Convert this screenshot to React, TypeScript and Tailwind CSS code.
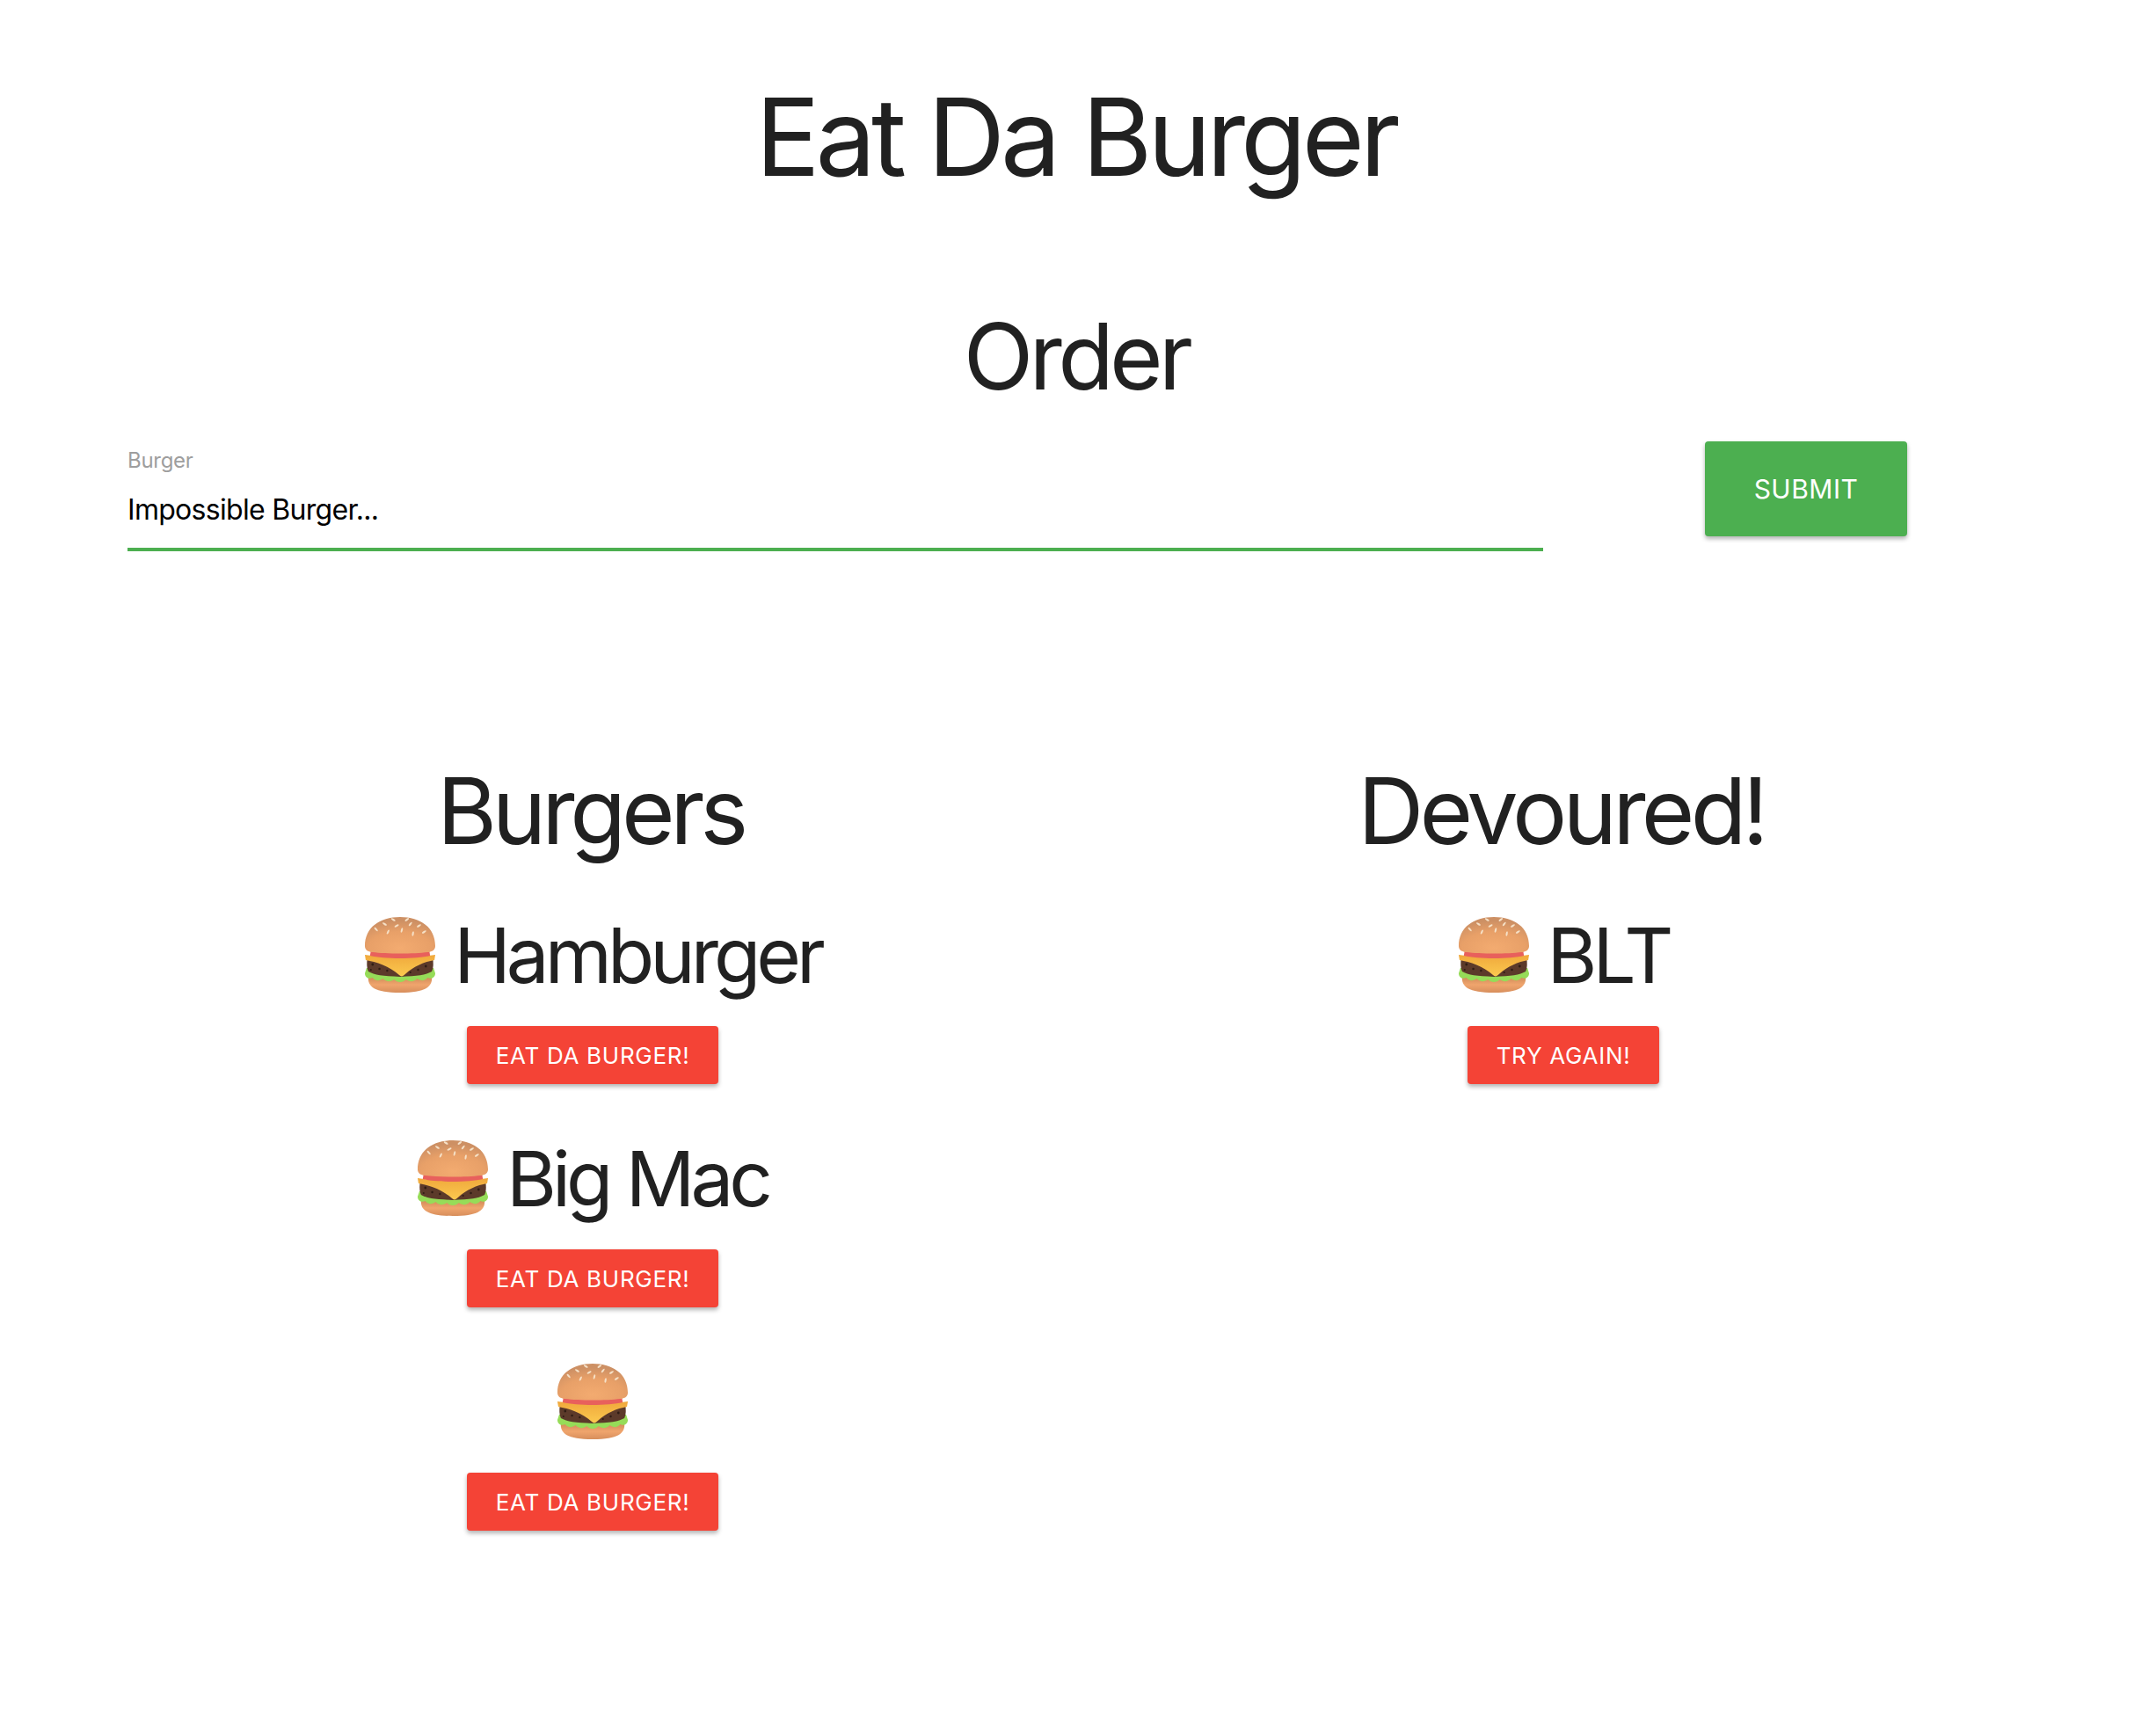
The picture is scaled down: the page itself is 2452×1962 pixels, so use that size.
import React from "react";

let uid = 0;
function BurgerIcon({ className = "" }: { className?: string }) {
  const id = React.useMemo(() => `b${uid++}`, []);
  const seeds: [number, number, number][] = [
    [34, 3, -60], [50, 3, 55], [24, 8, -60], [38, 10, 65], [54, 8, 40], [64, 10, 60], [14, 14, -45], [28, 17, 25], [44, 15, 15], [57, 19, 10], [70, 17, 60],
  ];
  return (
    <svg viewBox="0 0 84 86" preserveAspectRatio="none" className={className} aria-hidden="true">
      <defs>
        <radialGradient id={`${id}t`} cx="0.5" cy="0.85" r="0.75">
          <stop offset="0" stopColor="#f3ab70" />
          <stop offset="0.6" stopColor="#e8a068" />
          <stop offset="1" stopColor="#cd9064" />
        </radialGradient>
        <linearGradient id={`${id}b`} x1="0" y1="0" x2="0" y2="1">
          <stop offset="0" stopColor="#cf8a58" />
          <stop offset="0.5" stopColor="#f0a56d" />
          <stop offset="1" stopColor="#d78e5c" />
        </linearGradient>
        <linearGradient id={`${id}c`} x1="0" y1="0" x2="0" y2="1">
          <stop offset="0" stopColor="#f0a83c" />
          <stop offset="1" stopColor="#fbc94f" />
        </linearGradient>
      </defs>
      <path d="M5 68 C4 79 12 86 42 86 C72 86 80 79 79 68 Z" fill={`url(#${id}b)`} />
      <path d="M1 64 L3 58 L81 58 L83 64 C83 69 78 71 74 69 C71 73 66 73 62 70 C58 74 53 74 49 71 C45 75 39 75 35 71 C31 74 26 74 22 70 C18 73 13 73 10 69 C6 71 1 69 1 64 Z" fill="#96dc58" />
      <path d="M4 46 L80 46 C81 52 81 58 79 62 C72 66 62 67 42 68 C22 67 12 66 5 62 C3 58 3 52 4 46 Z" fill="#5c3a2a" />
      <g fill="#2f1c14">
        <circle cx="10" cy="54" r="1.4" /><circle cx="18" cy="59" r="1.3" /><circle cx="27" cy="61" r="1.2" /><circle cx="8" cy="60" r="1" /><circle cx="63" cy="60" r="1.3" /><circle cx="72" cy="56" r="1.4" /><circle cx="54" cy="63" r="1.1" />
      </g>
      <path d="M1 43 C20 46 64 46 83 43 L82 49 C70 51 58 56 48 65 C45 68 43 68 41 66 C30 56 14 51 2 49 Z" fill={`url(#${id}c)`} />
      <path d="M8 38 C22 40 62 40 76 38 L77 44 C60 48 24 48 7 44 Z" fill="#e8605c" />
      <path d="M1 33 C1 12 18 0 42 0 C66 0 83 12 83 33 C83 38 78 40 74 40 C58 42 26 42 10 40 C6 40 1 38 1 33 Z" fill={`url(#${id}t)`} />
      {seeds.map(([x, y, r], i) => (
        <ellipse key={i} cx={x} cy={y} rx="1.1" ry="2.8" transform={`rotate(${r} ${x} ${y})`} fill="#f5e0c6" />
      ))}
    </svg>
  );
}

function Item({ name, action }: { name: string; action: string }) {
  return (
    <div className="flex flex-col items-center">
      <div className="flex h-[90px] items-center justify-center gap-[20px] text-[87px] leading-none tracking-[-5px] text-[#212121]">
        <BurgerIcon className="h-[86px] w-[82px] shrink-0" />
        {name ? <span>{name}</span> : null}
      </div>
      <button className="mt-[36px] mb-[62px] h-[66px] rounded-[4px] bg-[#f44336] px-[33px] text-[26px] tracking-[0.7px] text-white shadow-[0_3px_5px_rgba(0,0,0,0.3)]">
        {action}
      </button>
    </div>
  );
}

export default function App() {
  return (
    <div className="min-h-[1962px] bg-white font-['Inter',sans-serif] text-[#212121]">
      <h1 className="pt-[92px] pr-[5px] text-center text-[122px] leading-[128px] tracking-[-5.1px]">Eat Da Burger</h1>
      <h2 className="mt-[127px] pr-[4px] text-center text-[104px] leading-[116px] tracking-[-4.8px]">Order</h2>
      <div className="mt-[46px] flex items-start pl-[145px]">
        <div className="w-[1610px]">
          <label className="block text-[24px] leading-[30px] tracking-[-0.3px] text-[#9e9e9e]">Burger</label>
          <div className="mt-[21px] text-[32px] leading-[40px] tracking-[-0.7px] text-black">Impossible Burger...</div>
          <div className="mt-[23px] h-[4px] bg-[#4caf50]" />
        </div>
        <button className="mt-[-7px] ml-[184px] h-[108px] w-[230px] rounded-[4px] bg-[#4caf50] text-[30px] tracking-[0.5px] text-white shadow-[0_3px_5px_rgba(0,0,0,0.3)]">
          SUBMIT
        </button>
      </div>
      <div className="mt-[237px] flex">
        <div className="w-[1348px]">
          <h2 className="pr-[5px] text-center text-[104px] leading-[116px] tracking-[-5.2px]">Burgers</h2>
          <div className="mt-[61px]">
            <Item name="Hamburger" action="EAT DA BURGER!" />
            <Item name="Big Mac" action="EAT DA BURGER!" />
            <Item name="" action="EAT DA BURGER!" />
          </div>
        </div>
        <div className="w-[860px]">
          <h2 className="pr-[5px] text-center text-[104px] leading-[116px] tracking-[-4.8px]">Devoured!</h2>
          <div className="mt-[61px]">
            <Item name="BLT" action="TRY AGAIN!" />
          </div>
        </div>
      </div>
    </div>
  );
}
